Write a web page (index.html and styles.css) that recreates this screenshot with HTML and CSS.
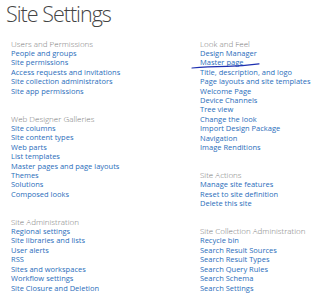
FILE: index.html
```html
<!DOCTYPE html>
<html lang="en">
<head>
  <meta charset="UTF-8">
  <title>Site Settings</title>
  <link rel="stylesheet" href="styles.css">
</head>
<body>

  <h1>Site Settings</h1>

  <div class="columns">
    <div class="col">
      <div class="group">
        <h2>Users and Permissions</h2>
        <ul>
          <li><a href="#">People and groups</a></li>
          <li><a href="#">Site permissions</a></li>
          <li><a href="#">Access requests and invitations</a></li>
          <li><a href="#">Site collection administrators</a></li>
          <li><a href="#">Site app permissions</a></li>
        </ul>
      </div>
      <div class="group">
        <h2>Web Designer Galleries</h2>
        <ul>
          <li><a href="#">Site columns</a></li>
          <li><a href="#">Site content types</a></li>
          <li><a href="#">Web parts</a></li>
          <li><a href="#">List templates</a></li>
          <li><a href="#">Master pages and page layouts</a></li>
          <li><a href="#">Themes</a></li>
          <li><a href="#">Solutions</a></li>
          <li><a href="#">Composed looks</a></li>
        </ul>
      </div>
      <div class="group">
        <h2>Site Administration</h2>
        <ul>
          <li><a href="#">Regional settings</a></li>
          <li><a href="#">Site libraries and lists</a></li>
          <li><a href="#">User alerts</a></li>
          <li><a href="#">RSS</a></li>
          <li><a href="#">Sites and workspaces</a></li>
          <li><a href="#">Workflow settings</a></li>
          <li><a href="#">Site Closure and Deletion</a></li>
        </ul>
      </div>
    </div>

    <div class="col">
      <div class="group">
        <h2>Look and Feel</h2>
        <ul>
          <li><a href="#">Design Manager</a></li>
          <li class="marked">
            <a href="#">Master page</a>
            <!-- hand drawn underline -->
            <svg class="scribble" width="70" height="8" viewBox="0 0 70 8">
              <path d="M1 6 C 12 5, 22 4.6, 36 4.4 S 58 3.2, 68 1.8" fill="none" stroke="#1d2fb0" stroke-width="1.2" stroke-linecap="round"/>
            </svg>
          </li>
          <li><a href="#">Title, description, and logo</a></li>
          <li><a href="#">Page layouts and site templates</a></li>
          <li><a href="#">Welcome Page</a></li>
          <li><a href="#">Device Channels</a></li>
          <li><a href="#">Tree view</a></li>
          <li><a href="#">Change the look</a></li>
          <li><a href="#">Import Design Package</a></li>
          <li><a href="#">Navigation</a></li>
          <li><a href="#">Image Renditions</a></li>
        </ul>
      </div>
      <div class="group">
        <h2>Site Actions</h2>
        <ul>
          <li><a href="#">Manage site features</a></li>
          <li><a href="#">Reset to site definition</a></li>
          <li><a href="#">Delete this site</a></li>
        </ul>
      </div>
      <div class="group">
        <h2>Site Collection Administration</h2>
        <ul>
          <li><a href="#">Recycle bin</a></li>
          <li><a href="#">Search Result Sources</a></li>
          <li><a href="#">Search Result Types</a></li>
          <li><a href="#">Search Query Rules</a></li>
          <li><a href="#">Search Schema</a></li>
          <li><a href="#">Search Settings</a></li>
        </ul>
      </div>
    </div>
  </div>

</body>
</html>
```

FILE: styles.css
```css
body {
  margin: 0;
  background: #fff;
  font-family: "Open Sans", Arial, sans-serif;
  overflow: hidden;
}
h1 {
  margin: 0;
  padding: 0 0 0 6px;
  font-size: 21.5px;
  font-weight: 300;
  letter-spacing: -1px;
  line-height: 28px;
  color: #444;
  height: 38px;
}
.columns {
  display: grid;
  grid-template-columns: 189px 1fr;
  padding-left: 11px;
}
.group {
  margin-bottom: 16.9px;
}
.group:last-child {
  margin-bottom: 0;
}
h2 {
  margin: 0;
  font-size: 8px;
  font-weight: 300;
  line-height: 11px;
  color: #7a7a7a;
}
ul {
  list-style: none;
  margin: 0;
  padding: 0;
}
li {
  font-size: 7.5px;
  line-height: 9.4px;
  white-space: nowrap;
}
a {
  color: #2a6ebb;
  text-decoration: none;
}
.marked {
  position: relative;
}
.scribble {
  position: absolute;
  left: -9px;
  top: 4px;
}
```
